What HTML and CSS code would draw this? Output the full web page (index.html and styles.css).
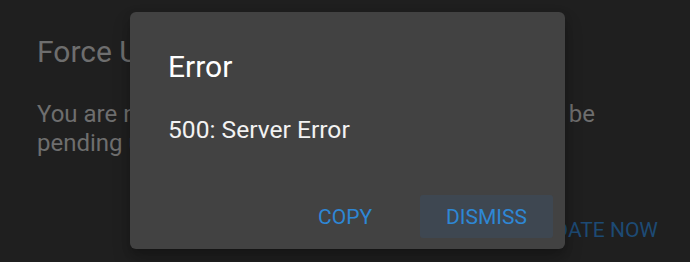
FILE: index.html
```html
<!DOCTYPE html>
<html lang="en">
<head>
<meta charset="utf-8">
<title>Error</title>
<link rel="stylesheet" href="styles.css">
</head>
<body>
  <div class="screen">
    <section class="bg-dialog">
      <h2 class="bg-title">Force Update</h2>
      <p class="bg-text">
        <span class="bg-line"><span>You are not up to date and updates will</span><span>be</span></span>
        <span class="bg-line">pending until you update.</span>
      </p>
      <div class="bg-actions">
        <span class="bg-btn">UPDATE NOW</span>
      </div>
    </section>

    <div class="dialog" role="alertdialog">
      <h2 class="dialog-title">Error</h2>
      <p class="dialog-body">500: Server Error</p>
      <div class="dialog-actions">
        <button class="btn">COPY</button>
        <button class="btn btn-focus">DISMISS</button>
      </div>
    </div>
  </div>
</body>
</html>
```

FILE: styles.css
```css
html, body {
  margin: 0;
  padding: 0;
  background: #1f1f1f;
}

body {
  width: 690px;
  height: 262px;
  overflow: hidden;
  font-family: Roboto, "Noto Sans", "Liberation Sans", sans-serif;
}

.screen {
  position: relative;
  width: 690px;
  height: 262px;
  background: #1f1f1f;
}

.bg-dialog {
  padding: 34px 32px 0 37px;
}

.bg-title {
  margin: 0;
  font-size: 30px;
  line-height: 36px;
  font-weight: 400;
  color: #6e6e6e;
}

.bg-text {
  margin: 30px 0 0 0;
  width: 558px;
  font-size: 24px;
  line-height: 29px;
  color: #6e6e6e;
}

.bg-line {
  display: flex;
  justify-content: space-between;
  white-space: nowrap;
}

.bg-actions {
  display: flex;
  justify-content: flex-end;
  margin-top: 51px;
}

.bg-btn {
  font-size: 21px;
  line-height: 43px;
  color: #1d4a74;
}

.dialog {
  position: absolute;
  left: 130px;
  top: 12px;
  width: 435px;
  height: 237px;
  box-sizing: border-box;
  padding: 37px 12px 0 38px;
  background: #424242;
  border-radius: 6px;
  box-shadow: 0 10px 18px rgba(0, 0, 0, 0.22), 0 4px 8px rgba(0, 0, 0, 0.15);
}

.dialog-title {
  margin: 0;
  font-size: 30px;
  line-height: 36px;
  font-weight: 400;
  color: #ffffff;
}

.dialog-body {
  margin: 30px 0 0 0;
  font-size: 24.6px;
  line-height: 30px;
  color: #f2f2f2;
}

.dialog-actions {
  display: flex;
  justify-content: flex-end;
  gap: 22px;
  margin-top: 50px;
}

.btn {
  height: 43px;
  padding: 0 26px;
  border: 0;
  border-radius: 3px;
  background: transparent;
  font-family: Roboto, "Noto Sans", "Liberation Sans", sans-serif;
  font-size: 21px;
  font-weight: 400;
  color: #2e87d5;
  cursor: pointer;
}

.btn-focus {
  background: #3e4751;
}
```
